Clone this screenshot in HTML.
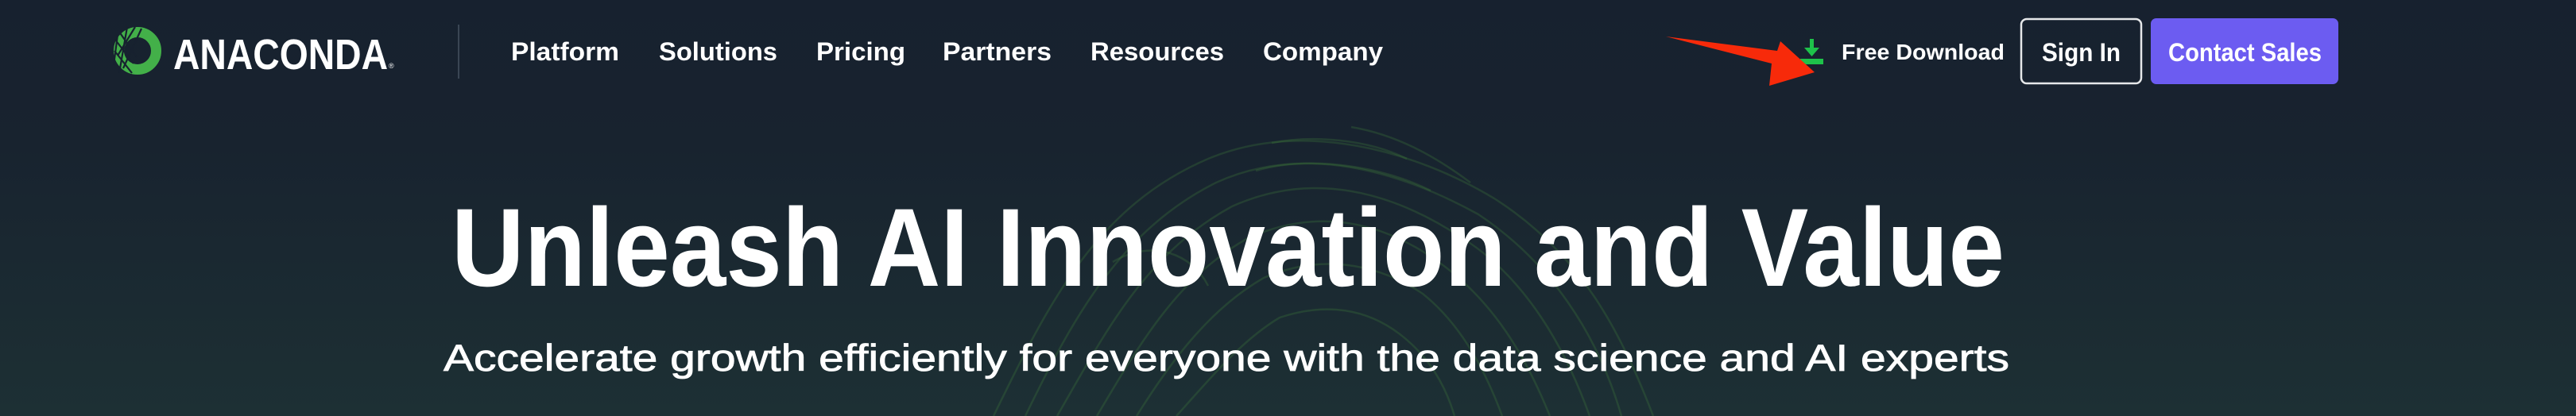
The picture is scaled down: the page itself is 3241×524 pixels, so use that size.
<!DOCTYPE html>
<html><head><meta charset="utf-8"><style>
html,body{margin:0;padding:0;width:3241px;height:524px;overflow:hidden;background:#17212f}
svg{display:block}
</style></head><body>
<svg width="3241" height="524" viewBox="0 0 3241 524" xmlns="http://www.w3.org/2000/svg">
<defs>
<linearGradient id="bg" x1="0" y1="0" x2="0" y2="1">
<stop offset="0" stop-color="#17212f"/><stop offset="0.35" stop-color="#18232f"/><stop offset="1" stop-color="#1d3034"/>
</linearGradient>
</defs>
<rect width="3241" height="524" fill="url(#bg)"/>
<g fill="none" stroke="#3f7a3a" stroke-opacity="0.3" stroke-width="2.5">
<path d="M1250 524 C1320 380 1380 260 1520 200 C1640 150 1780 190 1880 250 C1990 320 2040 420 2080 524"/>
<path d="M1290 524 C1350 400 1410 290 1530 230 C1640 180 1760 215 1860 270 C1950 330 2010 420 2040 524"/>
<path d="M1330 524 C1390 420 1440 320 1550 260 C1650 215 1750 240 1840 300 C1920 350 1970 440 2000 524"/>
<path d="M1380 524 C1430 440 1480 350 1570 300 C1660 260 1740 280 1810 330 C1880 380 1920 450 1950 524"/>
<path d="M1430 524 C1470 460 1520 390 1590 350 C1660 320 1730 330 1790 370 C1840 410 1870 470 1890 524"/>
<path d="M1480 524 C1520 480 1560 430 1610 400 C1670 380 1720 390 1760 420 C1800 450 1820 490 1830 524"/>
<path d="M1600 180 C1650 170 1720 175 1770 200 M1580 215 C1650 195 1740 210 1800 240"/>
<path d="M1400 330 C1450 300 1500 320 1520 360 M1700 160 C1760 170 1810 200 1850 230"/>
</g>
<circle cx="173" cy="64" r="23.5" fill="none" stroke="#43b049" stroke-width="13"/>
<g stroke="#17212f" stroke-width="2.2" fill="none">
<path d="M145 50 L168 80 M144 64 L166 92 M150 40 L172 72 M160 34 L150 92 M148 44 L143 82 M170 34 L148 70 M178 36 L155 86"/>
</g>
<text x="218" y="87" font-family="Liberation Sans, sans-serif" font-weight="700" font-size="54" fill="#fff" textLength="270" lengthAdjust="spacingAndGlyphs">ANACONDA</text>
<text x="489" y="86" font-family="Liberation Sans, sans-serif" font-size="9" fill="#fff">®</text>
<rect x="576" y="31" width="2" height="68" fill="#3a4654"/>
<g font-family="Liberation Sans, sans-serif" font-weight="700" font-size="32" fill="#fff">
<text x="643" y="76" textLength="136" lengthAdjust="spacingAndGlyphs">Platform</text>
<text x="829" y="76" textLength="149" lengthAdjust="spacingAndGlyphs">Solutions</text>
<text x="1027" y="76" textLength="112" lengthAdjust="spacingAndGlyphs">Pricing</text>
<text x="1186" y="76" textLength="137" lengthAdjust="spacingAndGlyphs">Partners</text>
<text x="1372" y="76" textLength="168" lengthAdjust="spacingAndGlyphs">Resources</text>
<text x="1589" y="76" textLength="151" lengthAdjust="spacingAndGlyphs">Company</text>
</g>
<rect x="2277" y="49" width="5" height="17" fill="#1ec24a"/>
<path d="M2270 60 L2289 60 L2279.5 71 Z" fill="#1ec24a"/>
<rect x="2265" y="74" width="29" height="7" fill="#1ec24a"/>
<path d="M2096 46 L2236 64 L2240 52 L2283 91 L2226 108 L2229 80 Z" fill="#f72a0a"/>
<text x="2317" y="75" font-family="Liberation Sans, sans-serif" font-weight="700" font-size="28" fill="#fff" textLength="205" lengthAdjust="spacingAndGlyphs">Free Download</text>
<rect x="2543" y="24" width="151" height="81" rx="7" fill="none" stroke="#e6e8ea" stroke-width="2.5"/>
<text x="2569" y="77" font-family="Liberation Sans, sans-serif" font-weight="700" font-size="32" fill="#fff" textLength="99" lengthAdjust="spacingAndGlyphs">Sign In</text>
<rect x="2706" y="23" width="236" height="83" rx="7" fill="#6c5cf1"/>
<text x="2728" y="77" font-family="Liberation Sans, sans-serif" font-weight="700" font-size="32" fill="#fff" textLength="193" lengthAdjust="spacingAndGlyphs">Contact Sales</text>
<text x="568" y="360" font-family="Liberation Sans, sans-serif" font-weight="700" font-size="140" fill="#fff" textLength="1954" lengthAdjust="spacingAndGlyphs">Unleash AI Innovation and Value</text>
<text x="558" y="467" font-family="Liberation Sans, sans-serif" font-size="47" fill="#fff" stroke="#fff" stroke-width="0.8" textLength="1970" lengthAdjust="spacingAndGlyphs">Accelerate growth efficiently for everyone with the data science and AI experts</text>
</svg>
</body></html>
